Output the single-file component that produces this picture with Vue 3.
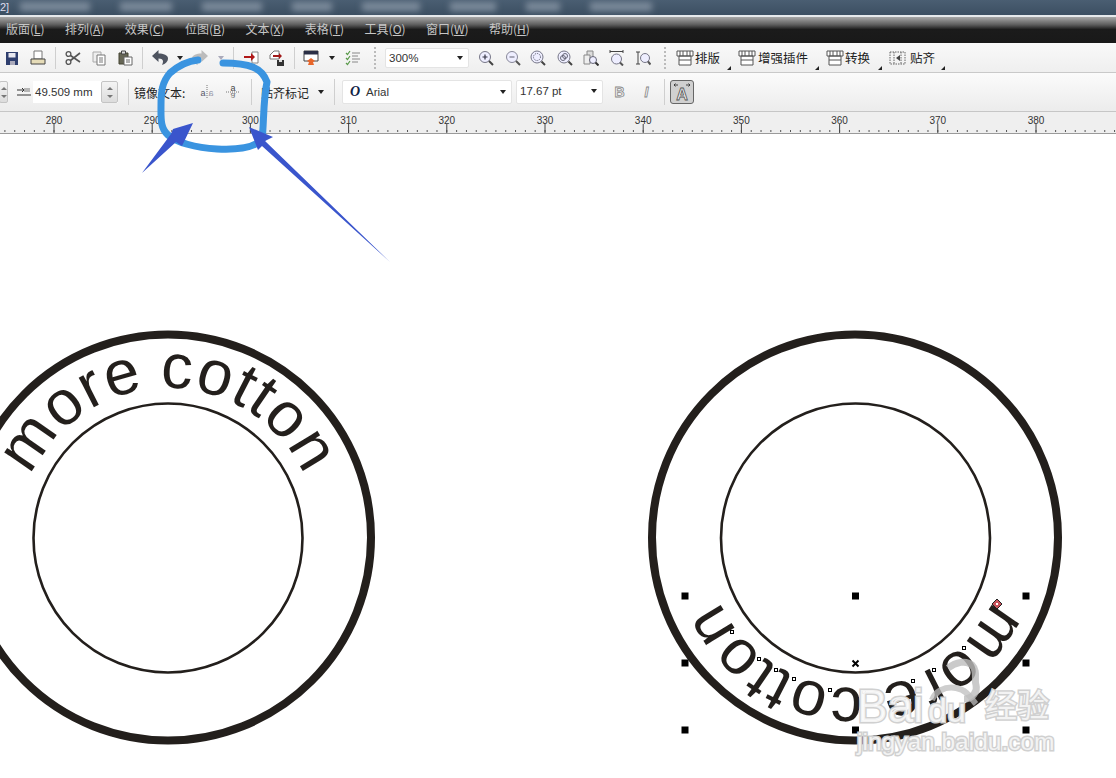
<script setup>
const menus = [
  ['版面', 'L'], ['排列', 'A'], ['效果', 'C'], ['位图', 'B'], ['文本', 'X'],
  ['表格', 'T'], ['工具', 'O'], ['窗口', 'W'], ['帮助', 'H']
]
const blurs = [70, 52, 60, 40, 58, 46, 34, 62]

const icons = {
  save: '<path d="M2 2h12v13H2z" fill="#2f3f6e"/><path d="M4.500 3h7v4.500h-7z" fill="#e8e8f0"/><path d="M6 11h5v4H6z" fill="#aab"/>',
  print: '<path d="M4 1h8v8H4z" fill="#fff" stroke="#777"/><path d="M1 9h14v5H1z" fill="#e6dcb8" stroke="#444"/>',
  cut: '<circle cx="3.500" cy="4" r="2.400" fill="none" stroke="#555" stroke-width="1.300"/><circle cx="3.500" cy="12" r="2.400" fill="none" stroke="#555" stroke-width="1.300"/><path d="M5.500 5.500 15 12M5.500 10.500 15 3" stroke="#555" stroke-width="1.600"/>',
  copy: '<path d="M2 2h8v10H2z" fill="#eee" stroke="#aaa"/><path d="M6 5h8v10H6z" fill="#fff" stroke="#777"/><path d="M8 8h4M8 10h4M8 12h4" stroke="#777"/>',
  paste: '<path d="M2 3h9v11H2z" fill="#665" stroke="#443"/><path d="M4.500 1h4v3h-4z" fill="#ddd" stroke="#444"/><path d="M7 7h8v8H7z" fill="#fff" stroke="#666"/><path d="M9 10h4M9 12h4" stroke="#666"/>',
  undo: '<path d="M6.500 0 0 6l6.500 6V8.500c3 0 4.500 1 4.500 3 0 1-.5 2.500-1 3.500 3.500-1 6-3.500 6-6.500C16 5 11.500 3.500 6.500 3.500z" fill="#4e5460"/>',
  redo: '<path d="M9.500 0 16 6l-6.500 6V8.500c-3 0-4.500 1-4.500 3 0 1 .5 2.500 1 3.500-3.500-1-6-3.500-6-6.500C0 5 4.500 3.500 9.500 3.500z" fill="#bcbcbc"/>',
  imp: '<path d="M9 2h6v11H9z" fill="#fff" stroke="#888"/><path d="M1 6h7V3l4 4-4 4V8H1z" fill="#b01818"/>',
  exp: '<path d="M1 5l4-4h5v8H1z" fill="#fff" stroke="#777"/><path d="M4 5h6V3l3 3-3 3V7H4z" fill="#a01818"/><path d="M8 10h7v6H8z" fill="#333"/><path d="M10 10h3v2h-3z" fill="#ddd"/>',
  color: '<path d="M1 1h14v10H1z" fill="#fff" stroke="#444"/><path d="M1 1h14v3.500H1z" fill="#2b2f45"/><path d="M8 8l4 3-2 1 1 3H5l1-3-2-1z" fill="#e8662a"/>',
  check: '<path d="M1 3l1.500 1.500L5 1M1 8l1.500 1.500L5 6M1 13l1.500 1.500L5 11" fill="none" stroke="#5a9a4a" stroke-width="1.200"/><path d="M7 3h8M7 6h6M7 9h8M7 12h6" stroke="#888"/>',
  zin: '<circle cx="7" cy="7" r="5.500" fill="#eef" stroke="#778"/><path d="M4.500 7h5M7 4.500v5" stroke="#334" stroke-width="1.200"/><path d="M11 11l4 4" stroke="#444" stroke-width="2"/>',
  zout: '<circle cx="7" cy="7" r="5.500" fill="#eef" stroke="#889"/><path d="M4.500 7h5" stroke="#778" stroke-width="1.200"/><path d="M11 11l4 4" stroke="#555" stroke-width="2"/>',
  zsel: '<circle cx="7" cy="7" r="6" fill="#eef" stroke="#778"/><circle cx="7" cy="7" r="3.500" fill="none" stroke="#556" stroke-dasharray="1 1"/><path d="M11.500 11.500l3.500 3.500" stroke="#444" stroke-width="2"/>',
  zall: '<circle cx="7" cy="7" r="6" fill="#eef" stroke="#778"/><circle cx="6" cy="8" r="2.500" fill="none" stroke="#667"/><circle cx="8" cy="6" r="2.500" fill="none" stroke="#667"/><path d="M11.500 11.500l3.500 3.500" stroke="#444" stroke-width="2"/>',
  zpage: '<path d="M4 1h6v9H4z" fill="#ddd" stroke="#888"/><path d="M1 5h6v9H1z" fill="#eee" stroke="#888"/><circle cx="10" cy="10" r="3.500" fill="#eef" stroke="#667"/><path d="M12.500 12.500 15.500 15.500" stroke="#333" stroke-width="2"/>',
  zwid: '<path d="M1 1.500h13M1 0v3M14 0v3" stroke="#444"/><circle cx="7.500" cy="9" r="5" fill="#eef" stroke="#778"/><path d="M11 12.500l3 3" stroke="#555" stroke-width="2"/>',
  zhei: '<path d="M1 2h4M1 14h4M3 2v12" stroke="#444"/><circle cx="10" cy="8" r="4.500" fill="#eef" stroke="#778"/><path d="M13 11.500l2.500 3" stroke="#555" stroke-width="2"/>',
  hmir: '<path d="M8 1v14" stroke="#777" stroke-dasharray="1 1"/><text x="1.500" y="11.500" font-size="9" font-family="Liberation Sans" fill="#556">a</text><text x="1.500" y="11.500" font-size="9" font-family="Liberation Sans" fill="#99a" transform="translate(16 0) scale(-1 1)">a</text>',
  vmir: '<path d="M1 8h14" stroke="#777" stroke-dasharray="1 1"/><text x="5.500" y="7" font-size="9" font-family="Liberation Sans" fill="#444">a</text><text x="5.500" y="-9" font-size="9" font-family="Liberation Sans" fill="#777" transform="scale(1 -1)">a</text>',
  bar: '<path d="M1 1h16v5H1zM3 6h12v9H3z" fill="#fff" stroke="#555"/><path d="M4 1v5M7 1v5M11 1v5M14 1v5" stroke="#555"/><path d="M3 10h12" stroke="#555"/>',
  snap: '<path d="M1 2h15v12H1z" fill="none" stroke="#666" stroke-dasharray="1.500 1"/><path d="M5 2v12M12 2v12" stroke="#666" stroke-dasharray="1.500 1"/><path d="M11 5v6L7 8z" fill="#444"/>'
}

const row1 = [
  { w: 24, i: 'save' }, { w: 28, i: 'print' }, { w: 6, s: 1 }, { w: 30, i: 'cut' }, { w: 22, i: 'copy' },
  { w: 30, i: 'paste' }, { w: 4, s: 1 }, { w: 32, i: 'undo' }, { w: 8, c: 1 }, { w: 32, i: 'redo' },
  { w: 10, c: 2 }, { w: 14, s: 1 }, { w: 22, i: 'imp' }, { w: 30, i: 'exp' }, { w: 4, s: 1 },
  { w: 30, i: 'color' }, { w: 12, c: 1 }, { w: 30, i: 'check' }, { w: 14, d: 1 }
]
const row1b = [
  { w: 34, i: 'zin' }, { w: 20, i: 'zout' }, { w: 30, i: 'zsel' }, { w: 24, i: 'zall' },
  { w: 28, i: 'zpage' }, { w: 24, i: 'zwid' }, { w: 28, i: 'zhei' }, { w: 16, d: 1 }
]
const flyouts = [
  { w: 62, i: 'bar', t: '排版', gap: 1 },
  { w: 88, i: 'bar', t: '增强插件', gap: 2 },
  { w: 63, i: 'bar', t: '转换', gap: 1 },
  { w: 63, i: 'snap', t: '贴齐', gap: 3 }
]

const ticks = []
for (let i = -5; i <= 112; i++) ticks.push(54 + i * 9.82)
const majors = []
for (let n = 0; n <= 10; n++) majors.push({ x: 54 + n * 98.2, label: 280 + n * 10 })

const handles = []
for (const x of [685, 855.5, 1026]) for (const y of [595, 662, 729]) {
  if (!(x === 855.5 && y === 662)) handles.push({ x, y })
}
const nodes = [[732, 631], [759, 658], [776, 669], [794, 678], [830, 689], [913, 680], [934, 669], [964, 647]]
</script>

<template>
  <div class="app">
    <header class="title">
      <span class="title-num">2]</span>
      <span v-for="(w, i) in blurs" :key="i" class="blur" :style="{ width: w + 'px' }"></span>
    </header>
    <nav class="menu">
      <span v-for="m in menus" :key="m[0]" class="menu-item">{{ m[0] }}(<u>{{ m[1] }}</u>)</span>
    </nav>

    <div class="bar bar1">
      <template v-for="(t, k) in row1" :key="k">
        <span class="cell" :style="{ width: t.w + 'px' }">
          <svg v-if="t.i" class="ic" viewBox="0 0 16 16" v-html="icons[t.i]"></svg>
          <span v-else-if="t.s" class="sep"></span>
          <span v-else-if="t.d" class="dots"></span>
          <span v-else class="caret" :class="{ dim: t.c === 2 }"></span>
        </span>
      </template>
      <span class="combo zoom-combo"><span>300%</span><span class="caret"></span></span>
      <template v-for="(t, k) in row1b" :key="'b' + k">
        <span class="cell" :style="{ width: t.w + 'px' }">
          <svg v-if="t.i" class="ic" viewBox="0 0 16 16" v-html="icons[t.i]"></svg>
          <span v-else class="dots"></span>
        </span>
      </template>
      <span class="spacer3"></span>
      <span v-for="f in flyouts" :key="f.t" class="fly" :style="{ width: f.w + 'px', gap: f.gap + 'px' }">
        <svg class="ic-bar" viewBox="0 0 18 16" v-html="icons[f.i]"></svg>
        <span>{{ f.t }}</span>
        <i class="corner"></i>
      </span>
    </div>

    <div class="bar bar2">
      <span class="stub"><i class="up"></i><i class="down"></i></span>
      <svg class="size-ic" viewBox="0 0 14 10">
        <path d="M0 3h7M5 1l2 2-2 2M0 8h14" stroke="#333" fill="none" />
        <path d="M8 1v4M10 1v4M12 1v4" stroke="#777" />
      </svg>
      <span class="num-input">
        <span class="num-text">49.509 mm</span>
        <span class="spin"><i class="up"></i><i class="down"></i></span>
      </span>
      <span class="cell w21"><span class="sep tall"></span></span>
      <span class="lbl mirror-lbl">镜像文本:</span>
      <span class="cell c-h"><svg class="ic" viewBox="0 0 16 16" v-html="icons.hmir"></svg></span>
      <span class="cell c-v"><svg class="ic" viewBox="0 0 16 16" v-html="icons.vmir"></svg></span>
      <span class="cell c-s1"><span class="sep tall"></span></span>
      <span class="lbl snap-lbl">贴齐标记</span>
      <span class="cell c-car"><span class="caret"></span></span>
      <span class="cell c-s2"><span class="sep tall"></span></span>
      <span class="combo font-combo">
        <span class="font-name"><b class="font-o">O</b>Arial</span>
        <span class="caret"></span>
      </span>
      <span class="combo size-combo"><span>17.67 pt</span><span class="caret"></span></span>
      <span class="fmt">B</span>
      <span class="fmt ital">I</span>
      <span class="cell c-s3"><span class="sep tall"></span></span>
      <span class="fit-btn">
        <svg class="fit-ic" viewBox="0 0 22 22">
          <path d="M3 4h4M3 4l1.500-1.500M3 4l1.500 1.500M19 4h-4M19 4l-1.500-1.500M19 4l-1.500 1.500" stroke="#333" fill="none" stroke-width=".9" />
          <text class="fit-a" x="11" y="19" text-anchor="middle">A</text>
        </svg>
      </span>
    </div>

    <div class="ruler">
      <svg class="ruler-svg" viewBox="0 0 1116 22">
        <path v-for="t in ticks" :key="t" :d="`M${t} 18v2`" stroke="#555" />
        <g v-for="m in majors" :key="m.label">
          <path :d="`M${m.x} 12v9`" stroke="#444" />
          <text class="ruler-txt" :x="m.x" y="12" text-anchor="middle">{{ m.label }}</text>
        </g>
        <path d="M0 21.500H1116" stroke="#9a9a9a" />
      </svg>
    </div>

    <main class="canvas">
      <svg class="draw" viewBox="0 133 1116 645">
        <defs>
          <path id="arcL" d="M18 537A150 150 0 0 1 318 537" />
          <path id="arcR" d="M705.500 537A150 150 0 0 1 1005.500 537" />
        </defs>
        <circle cx="168" cy="536.500" r="203" class="ring-o" />
        <circle cx="168" cy="537" r="134.500" class="ring-i" />
        <text class="arc-text"><textPath href="#arcL" startOffset="50%" text-anchor="middle">more cotton</textPath></text>

        <circle cx="855" cy="536.500" r="203" class="ring-o" />
        <circle cx="855.500" cy="537" r="134.500" class="ring-i" />
        <g transform="rotate(180 855.500 537)">
          <text class="arc-text"><textPath href="#arcR" startOffset="50%" text-anchor="middle">more cotton</textPath></text>
        </g>

        <rect v-for="h in handles" :key="h.x + '-' + h.y" :x="h.x - 3.500" :y="h.y - 3.500" width="7" height="7" fill="#000" />
        <path d="M852.500 659.500l6 6M858.500 659.500l-6 6" stroke="#000" stroke-width="2" />
        <rect v-for="n in nodes" :key="n[0]" :x="n[0] - 1.500" :y="n[1] - 1.500" width="3" height="3" fill="#fff" stroke="#000" stroke-width="1" />
        <rect x="862.500" y="689.500" width="3" height="3" fill="#fff" stroke="#aaa" />
        <path d="M997 598l5 5-5 5-5-5z" fill="#c9545c" stroke="#222" />
        <rect x="996" y="602" width="2" height="2" fill="#fff" />
      </svg>
    </main>

    <svg class="overlay" viewBox="0 0 1116 778">
      <!-- watermark -->
      <g class="wm">
        <path d="M948 668c8-6 18-8 24-3 6 6 2 14 4 20 2 7-4 14-12 14" fill="none" stroke="#bdbdbd" stroke-width="7" opacity=".8" />
        <path d="M932 700c3-8 12-14 24-12s16 12 20 16" fill="none" stroke="#bdbdbd" stroke-width="6" opacity=".75" />
        <text class="wm-t wm-bai" x="857" y="722">Bai</text>
        <text class="wm-t wm-du" x="928" y="722">du</text>
        <text class="wm-t wm-cn" x="985" y="717">经验</text>
        <text class="wm-t wm-url" x="857" y="750">jingyan.baidu.com</text>
      </g>
      <!-- annotations -->
      <path class="loop" d="M198 60C188 61 178 66 170 73C162 82 161 92 161 105C161 118 160 128 168 135C176 142 195 148 217 149C235 150 252 149 262 140C264 125 263 100 267 82C262 68 250 63 223 63" />
      <path class="arrow" d="M142 173 171 134 173 129 193 123 182 146 176 142z" />
      <path class="arrow" d="M249 127 273 137 265 141 390 262 262 146 258 150z" />
    </svg>
  </div>
</template>

<style>
html, body { margin: 0; padding: 0; background: #fff; }
</style>

<style scoped>
.app {
  position: relative;
  width: 1116px;
  height: 778px;
  overflow: hidden;
  display: flex;
  flex-direction: column;
  background: #fff;
  font-family: "Noto Sans CJK SC", "Liberation Sans", sans-serif;
}
.title {
  flex: none;
  display: flex;
  align-items: center;
  gap: 30px;
  background: linear-gradient(#4a5e72, #3c4f62);
  border-bottom: 2px solid #e6e9ec;
  overflow: hidden;
  box-sizing: border-box;
  height: 17px;
  padding-bottom: 2px;
}
.title-num {
  font: 11px "Liberation Sans", sans-serif;
  color: #dde;
  width: 8px;
  margin-right: -18px;
  flex: none;
}
.blur {
  height: 9px;
  flex: none;
  background: #7c8b9b;
  filter: blur(3px);
}
.menu {
  height: 26px;
  flex: none;
  display: flex;
  align-items: flex-end;
  gap: 20.4px;
  padding: 0 0 7px 6px;
  box-sizing: border-box;
  background: linear-gradient(#a8a8a8 0, #5c5c5c 30%, #1b1b1b 48%, #191919 100%);
}
.menu-item {
  font-size: 12px;
  line-height: 14px;
  color: #c6c6c6;
  white-space: nowrap;
}
.bar {
  flex: none;
  display: flex;
  align-items: center;
  box-sizing: border-box;
}
.bar1 {
  height: 30px;
  background: linear-gradient(#f9f9f9, #efefef);
  border-bottom: 1px solid #c9c9c9;
}
.bar2 {
  height: 39px;
  background: linear-gradient(#fbfbfb, #ececec);
  border-bottom: 1px solid #c6c6c6;
}
.cell {
  flex: none;
  display: flex;
  align-items: center;
  justify-content: center;
}
.ic { width: 16px; height: 16px; display: block; }
.sep { width: 1px; height: 22px; background: #cfcfcf; display: block; }
.sep.tall { height: 26px; }
.dots {
  width: 2px;
  height: 22px;
  display: block;
  background: repeating-linear-gradient(#bbb 0 2px, transparent 2px 4px);
}
.caret {
  display: block;
  width: 0;
  height: 0;
  border: 3.5px solid transparent;
  border-top: 4px solid #222;
  border-bottom: 0;
}
.caret.dim { border-top-color: #aab; }
.combo {
  flex: none;
  display: flex;
  align-items: center;
  justify-content: space-between;
  box-sizing: border-box;
  background: #fff;
  border: 1px solid #e4e4e4;
  border-radius: 2px;
  font: 11.5px "Liberation Sans", sans-serif;
  color: #333;
}
.zoom-combo { width: 84px; height: 20px; margin-left: 3px; padding: 0 5px 0 3px; }
.spacer3 { width: 3px; flex: none; }
.fly {
  position: relative;
  flex: none;
  display: flex;
  align-items: center;
  font-size: 12.5px;
  color: #222;
  white-space: nowrap;
  height: 26px;
}
.ic-bar { width: 18px; height: 16px; flex: none; }
.corner {
  position: absolute;
  right: 7px;
  bottom: 1px;
  width: 0;
  height: 0;
  border-style: solid;
  border-width: 0 0 4px 4px;
  border-color: transparent transparent #222 transparent;
}
.stub, .spin {
  flex: none;
  display: flex;
  flex-direction: column;
  align-items: center;
  justify-content: center;
  gap: 5px;
  box-sizing: border-box;
  height: 22px;
  background: linear-gradient(#f4f4f4, #dcdcdc);
  border: 1px solid #c4c4c4;
  border-radius: 2px;
}
.stub { width: 9px; margin-left: -1px; }
.spin { width: 17px; }
.up, .down { display: block; width: 0; height: 0; border: 3px solid transparent; }
.up { border-top: 0; border-bottom: 3px solid #777; }
.down { border-bottom: 0; border-top: 3px solid #777; }
.size-ic { width: 14px; height: 10px; flex: none; margin-left: 9px; }
.num-input {
  flex: none;
  width: 85px;
  height: 22px;
  margin-left: 2px;
  display: flex;
  align-items: center;
  justify-content: space-between;
  background: #fff;
  font: 11.5px "Liberation Sans", sans-serif;
  color: #333;
}
.num-text { padding-left: 2px; }
.w21 { width: 21px; }
.c-h { width: 30px; margin-left: 6px; }
.c-v { width: 22px; }
.c-s1 { width: 14px; }
.c-car { width: 24px; }
.c-s2 { width: 2px; }
.c-s3 { width: 22px; }
.lbl { font-size: 12px; color: #222; flex: none; white-space: nowrap; }
.mirror-lbl { width: 52px; margin-left: -5px; }
.snap-lbl { width: 48px; margin-left: 3px; }
.font-combo { width: 170px; height: 24px; margin-left: 7px; padding: 0 5px 0 7px; }
.font-name { display: flex; align-items: center; }
.font-o {
  font: italic bold 14px "Liberation Serif", serif;
  color: #124;
  margin-right: 9px;
  width: 7px;
}
.size-combo { width: 87px; height: 24px; margin-left: 4px; padding: 0 5px 3px 3px; }
.fmt {
  flex: none;
  width: 13px;
  height: 14px;
  margin-left: 10px;
  display: flex;
  align-items: center;
  justify-content: center;
  font: bold 14px "Liberation Sans", sans-serif;
  color: #f4f4f4;
  -webkit-text-stroke: 0.8px #888;
}
.ital { font-style: italic; margin-left: 14px; }
.fit-btn {
  flex: none;
  box-sizing: border-box;
  width: 24px;
  height: 24px;
  margin-left: -5px;
  display: flex;
  align-items: center;
  justify-content: center;
  background: #d0d0d0;
  border: 1px solid #666;
  border-radius: 3px;
}
.fit-ic { width: 22px; height: 22px; display: block; }
.fit-a {
  font: bold 16px "Liberation Sans", sans-serif;
  fill: #eee;
  stroke: #555;
  stroke-width: 0.8px;
}
.ruler {
  height: 22px;
  flex: none;
  background: #efefef;
}
.ruler-svg { display: block; width: 1116px; height: 22px; }
.ruler-txt { font: 10px "Liberation Sans", sans-serif; fill: #333; }
.canvas { flex: 1; min-height: 0; background: #fff; }
.draw { display: block; width: 1116px; height: 645px; }
.ring-o { fill: none; stroke: #231f1c; stroke-width: 8px; }
.ring-i { fill: none; stroke: #231f1c; stroke-width: 2.6px; }
.arc-text {
  font: 63px "Liberation Sans", sans-serif;
  letter-spacing: 1.3px;
  word-spacing: -3.5px;
  fill: #231f1c;
}
.overlay {
  position: absolute;
  left: 0;
  top: 0;
  width: 1116px;
  height: 778px;
  pointer-events: none;
}
.loop { fill: none; stroke: #3a94e0; stroke-width: 7px; stroke-linecap: round; stroke-linejoin: round; }
.arrow { fill: #3a55cc; }
.wm-t {
  fill: rgba(255, 255, 255, 0.75);
  stroke: #d0d0d0;
  stroke-width: 3px;
  paint-order: stroke fill;
}
.wm-bai, .wm-du { font: 46px "Liberation Sans", sans-serif; }
.wm-du { font-size: 34px; }
.wm-cn { font: 32px "Noto Sans CJK SC", sans-serif; }
.wm-url { font: 24.5px "Liberation Sans", sans-serif; }
</style>
